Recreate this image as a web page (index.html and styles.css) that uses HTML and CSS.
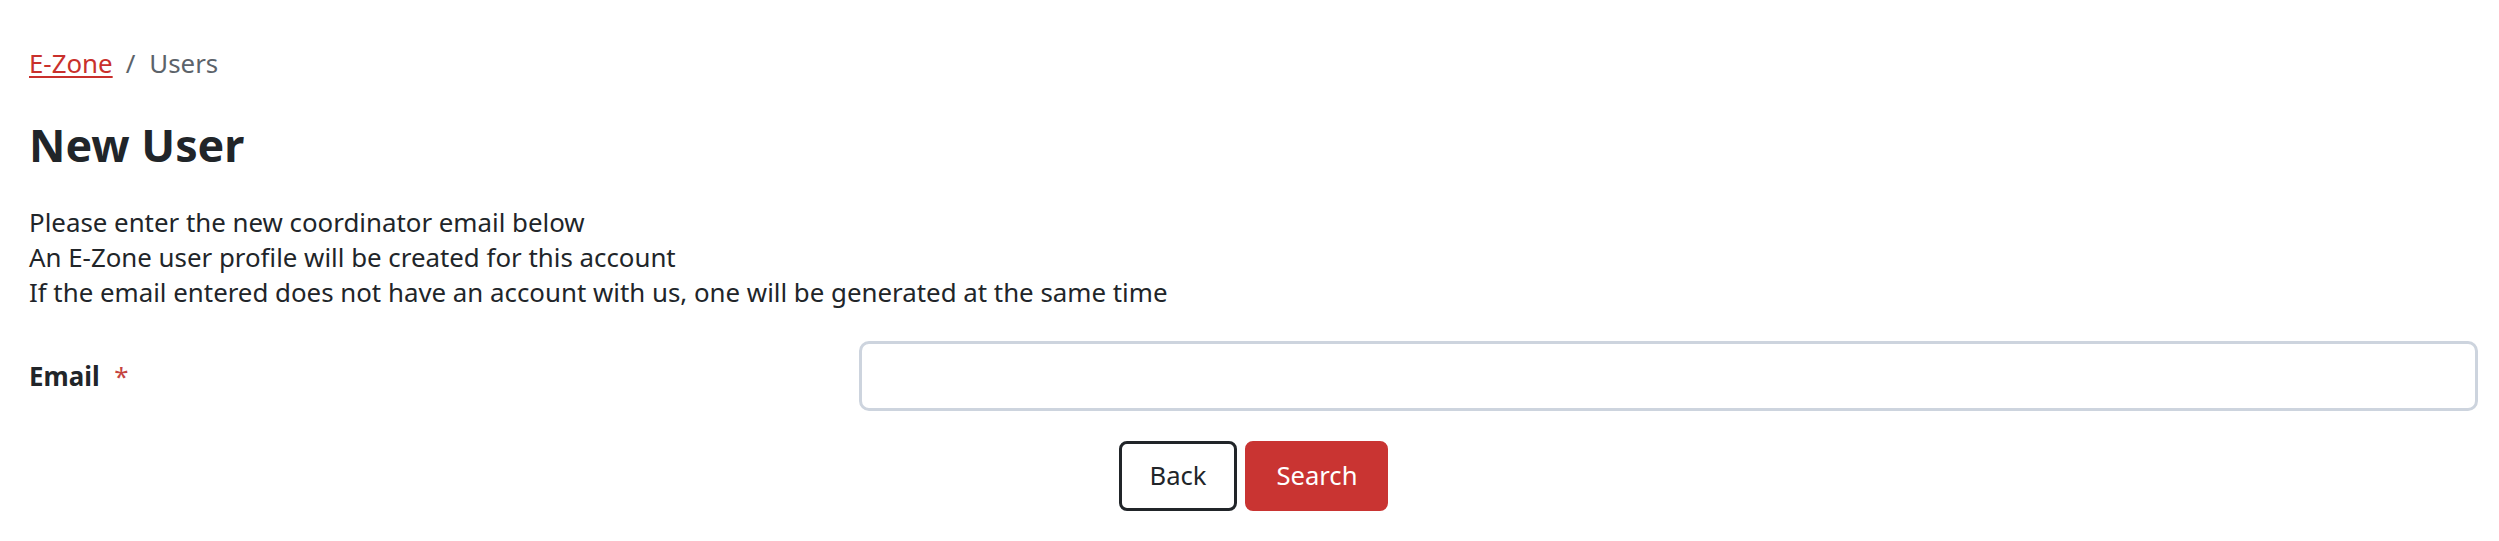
FILE: index.html
```html
<!DOCTYPE html>
<html lang="en">
<head>
<meta charset="utf-8">
<title>New User</title>
<link rel="stylesheet" href="styles.css">
</head>
<body>
<main class="page">
  <nav class="breadcrumb">
    <a class="crumb-link" href="#">E-Zone</a>
    <span class="crumb-sep">/</span>
    <span class="crumb-current">Users</span>
  </nav>
  <h1 class="title">New User</h1>
  <p class="intro">Please enter the new coordinator email below<br>An E-Zone user profile will be created for this account<br>If the email entered does not have an account with us, one will be generated at the same time</p>
  <form class="form">
    <div class="form-row">
      <label class="form-label" for="email">Email <span class="required">*</span></label>
      <input class="form-input" id="email" type="email">
    </div>
    <div class="actions">
      <button type="button" class="btn btn-outline">Back</button>
      <button type="button" class="btn btn-primary">Search</button>
    </div>
  </form>
</main>
</body>
</html>
```
FILE: styles.css
```css
* { box-sizing: border-box; }

html, body {
  margin: 0;
  background: #ffffff;
}

body {
  font-family: "Noto Sans", "Open Sans", sans-serif;
  font-size: 25.85px;
  line-height: 38.4px;
  color: #212529;
}

.page {
  padding: 44px 21px 0 29px;
}

.breadcrumb {
  display: flex;
  align-items: baseline;
  line-height: 38.4px;
}

.crumb-link {
  color: #c9302c;
  text-decoration: underline;
  text-decoration-thickness: 2px;
  text-underline-offset: 3px;
}

.crumb-sep {
  color: #5c636a;
  padding: 0 14px 0 13px;
}

.crumb-current {
  color: #5c636a;
}

.title {
  margin: 36px 0 0;
  font-size: 44.8px;
  line-height: 53.76px;
  font-weight: 700;
  color: #212529;
}

.intro {
  margin: 33px 0 0;
  line-height: 35px;
}

.form {
  margin-top: 31px;
}

.form-row {
  display: grid;
  grid-template-columns: 792px 1fr;
  column-gap: 38px;
  align-items: center;
}

.form-label {
  font-weight: 700;
  line-height: 38.4px;
}

.required {
  color: #c5443f;
  font-weight: 400;
  margin-left: 8px;
}

.form-input {
  height: 70px;
  width: 100%;
  border: 3px solid #cdd4de;
  border-radius: 10px;
  background: #ffffff;
  font: inherit;
  padding: 0 16px;
  outline: none;
}

.actions {
  display: flex;
  justify-content: center;
  gap: 8px;
  margin-top: 30px;
}

.btn {
  height: 70px;
  padding: 0 28px;
  border: 3px solid transparent;
  border-radius: 8px;
  font-family: inherit;
  font-size: 25.6px;
  line-height: 1;
  cursor: pointer;
}

.btn-outline {
  background: #ffffff;
  border-color: #212529;
  color: #212529;
}

.btn-primary {
  background: #c93432;
  border-color: #c93432;
  color: #ffffff;
}
```
